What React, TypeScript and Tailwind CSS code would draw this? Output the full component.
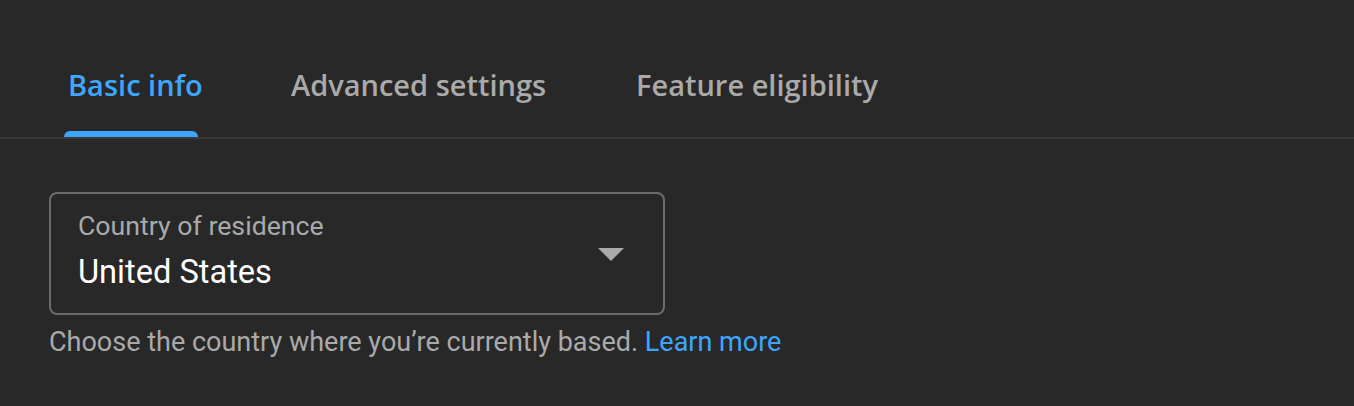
import React from "react";

export default function App() {
  const tabs = [
    { t: "Basic info", w: "w-[223px]" },
    { t: "Advanced settings", w: "w-[345px]" },
    { t: "Feature eligibility", w: "w-[300px]" },
  ];
  return (
    <div className="w-[1354px] h-[406px] bg-[#282828] overflow-hidden">
      <div className="border-b-2 border-[#3a3a3a] pl-[68px] pt-[62px] flex">
        {tabs.map((tab, i) => (
          <div key={tab.t} className={`flex flex-col ${tab.w}`}>
            <span
              className={`text-[29px] font-semibold leading-[46px] whitespace-nowrap ${i === 0 ? "text-[#3ea6ff]" : "text-[#aaaaaa]"}`}
              style={{ fontFamily: '"Open Sans", sans-serif' }}
            >
              {tab.t}
            </span>
            <div
              className={`h-[6px] mt-[23px] -ml-[4px] w-[134px] rounded-t-[6px] ${i === 0 ? "bg-[#3ea6ff]" : "bg-transparent"}`}
            />
          </div>
        ))}
      </div>
      <div className="pl-[49px] pt-[53px]" style={{ fontFamily: "Roboto, sans-serif" }}>
        <div className="w-[616px] h-[123px] border-2 border-[#6b6b6b] rounded-[8px] flex items-start justify-between pl-[27px] pr-[39px] pt-[17px]">
          <div className="flex flex-col">
            <span className="text-[26.7px] leading-[30px] text-[#aaaaaa]">Country of residence</span>
            <span className="text-[32.6px] leading-[40px] text-white mt-[11px]">United States</span>
          </div>
          <svg width="26" height="13" viewBox="0 0 26 13" className="mt-[37px]">
            <polygon points="0,0 26,0 13,13" fill="#aaaaaa" />
          </svg>
        </div>
        <div className="mt-[11px] text-[27px] leading-[32px] text-[#aaaaaa]">
          Choose the country where you’re currently based.{" "}
          <span className="text-[#3ea6ff]">Learn more</span>
        </div>
      </div>
    </div>
  );
}
